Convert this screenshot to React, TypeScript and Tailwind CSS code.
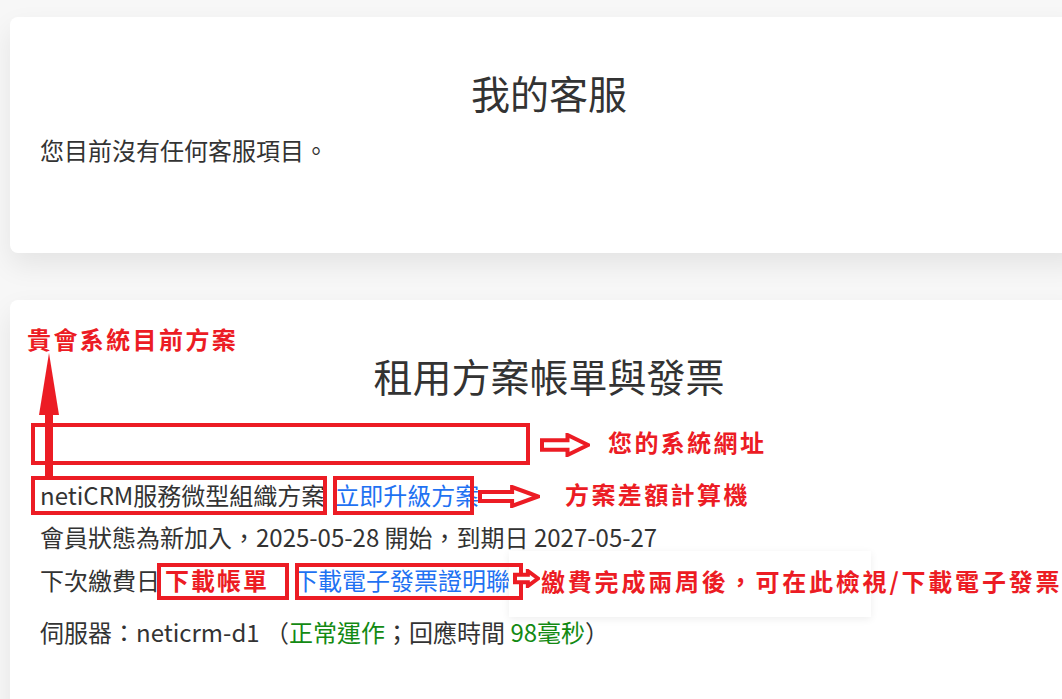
const RED = "#ec1c24";

function HollowArrow({ w, h, className }: { w: number; h: number; className: string }) {
  // outlined right arrow, like the ones drawn in a screenshot editor
  const s = 2;
  const top = h * 0.3;
  const bot = h * 0.7;
  const neck = w * 0.55;
  const pts = [
    [s, top],
    [neck, top],
    [neck, s],
    [w - s, h / 2],
    [neck, h - s],
    [neck, bot],
    [s, bot],
  ]
    .map((p) => p.join(","))
    .join(" ");
  return (
    <svg className={className} width={w} height={h} viewBox={`0 0 ${w} ${h}`} aria-hidden="true">
      <polygon points={pts} fill="white" stroke={RED} strokeWidth={4} strokeLinejoin="miter" />
    </svg>
  );
}

function UpArrow({ className }: { className: string }) {
  return (
    <svg className={className} width={20} height={124} viewBox="0 0 20 124" aria-hidden="true">
      <polygon points="10,0 20,62 0,62" fill={RED} />
      <rect x={6} y={58} width={8} height={66} fill={RED} />
    </svg>
  );
}

function Note({ children, className }: { children: React.ReactNode; className: string }) {
  return (
    <div className={`absolute whitespace-nowrap text-[24px] font-bold leading-[26px] text-[#ec1c24] ${className}`}>
      {children}
    </div>
  );
}

export default function App() {
  return (
    <div className="min-h-screen w-full overflow-hidden bg-[#f7f7f7] font-['Noto_Sans_CJK_TC','Noto_Sans',sans-serif] text-[#333]">
      <div className="ml-[10px] flex w-[1078px] flex-col gap-[47px] pt-[17px]">
        <section className="h-[236px] rounded-lg bg-white px-[30px] pt-[52px] shadow-[0_12px_28px_rgba(0,0,0,0.08)]">
          <h1 className="text-center text-[39px] leading-[47px]">我的客服</h1>
          <p className="mt-[16px] text-[24px] leading-[36px]">您目前沒有任何客服項目。</p>
        </section>

        <section className="relative h-[420px] rounded-lg bg-white px-[30px] pt-[52px] shadow-[0_12px_28px_rgba(0,0,0,0.08)]">
          <h1 className="text-center text-[39px] leading-[47px]">租用方案帳單與發票</h1>

          <div className="mt-[24px] h-[42px]" />

          <div className="mt-[12px] flex h-[36px] items-center text-[24px] leading-[36px]">
            <span>netiCRM服務微型組織方案</span>
            <a className="ml-[10px] text-[#1f72f2]">立即升級方案</a>
          </div>

          <div className="mt-[6px] h-[36px] text-[24px] leading-[36px]">
            會員狀態為新加入，2025-05-28 開始，到期日 2027-05-27
          </div>

          <div className="mt-[7px] flex h-[36px] items-center text-[24px] leading-[36px]">
            <span>下次繳費日</span>
            <span className="w-[134px] pl-[5px] font-bold tracking-[2px] text-[#ec1c24]">下載帳單</span>
            <a className="text-[#1f72f2]">下載電子發票證明聯</a>
          </div>

          <div className="mt-[16px] h-[36px] text-[24px] leading-[36px]">
            伺服器：neticrm-d1 （<span className="text-[#138a13]">正常運作</span>；回應時間{" "}
            <span className="text-[#138a13]">98毫秒</span>）
          </div>

          {/* annotations drawn over the screenshot */}
          <div className="absolute left-[499px] top-[251px] h-[66px] w-[362px] bg-white shadow-[0_2px_8px_rgba(0,0,0,0.07)]" />
          <Note className="left-[17px] top-[26px] tracking-[2.4px]">貴會系統目前方案</Note>
          <div className="absolute left-[21px] top-[123px] h-[42px] w-[499px] border-4 border-[#ec1c24]" />
          <UpArrow className="absolute left-[29px] top-[53px]" />
          <HollowArrow w={50} h={24} className="absolute left-[530px] top-[133px]" />
          <Note className="left-[598px] top-[129px] tracking-[2.4px]">您的系統網址</Note>
          <div className="absolute left-[21px] top-[176px] h-[39px] w-[296px] border-4 border-[#ec1c24]" />
          <div className="absolute left-[323px] top-[176px] h-[39px] w-[141px] border-4 border-[#ec1c24]" />
          <HollowArrow w={62} h={23} className="absolute left-[468px] top-[185px]" />
          <Note className="left-[555px] top-[181px] tracking-[2.4px]">方案差額計算機</Note>
          <div className="absolute left-[147px] top-[263px] h-[37px] w-[132px] border-4 border-[#ec1c24]" />
          <div className="absolute left-[285px] top-[263px] h-[37px] w-[228px] border-4 border-[#ec1c24]" />
          <HollowArrow w={27} h={19} className="absolute left-[503px] top-[269px]" />
          <Note className="left-[531px] top-[268px] tracking-[2.8px]">繳費完成兩周後，可在此檢視/下載電子發票</Note>
        </section>
      </div>
    </div>
  );
}
